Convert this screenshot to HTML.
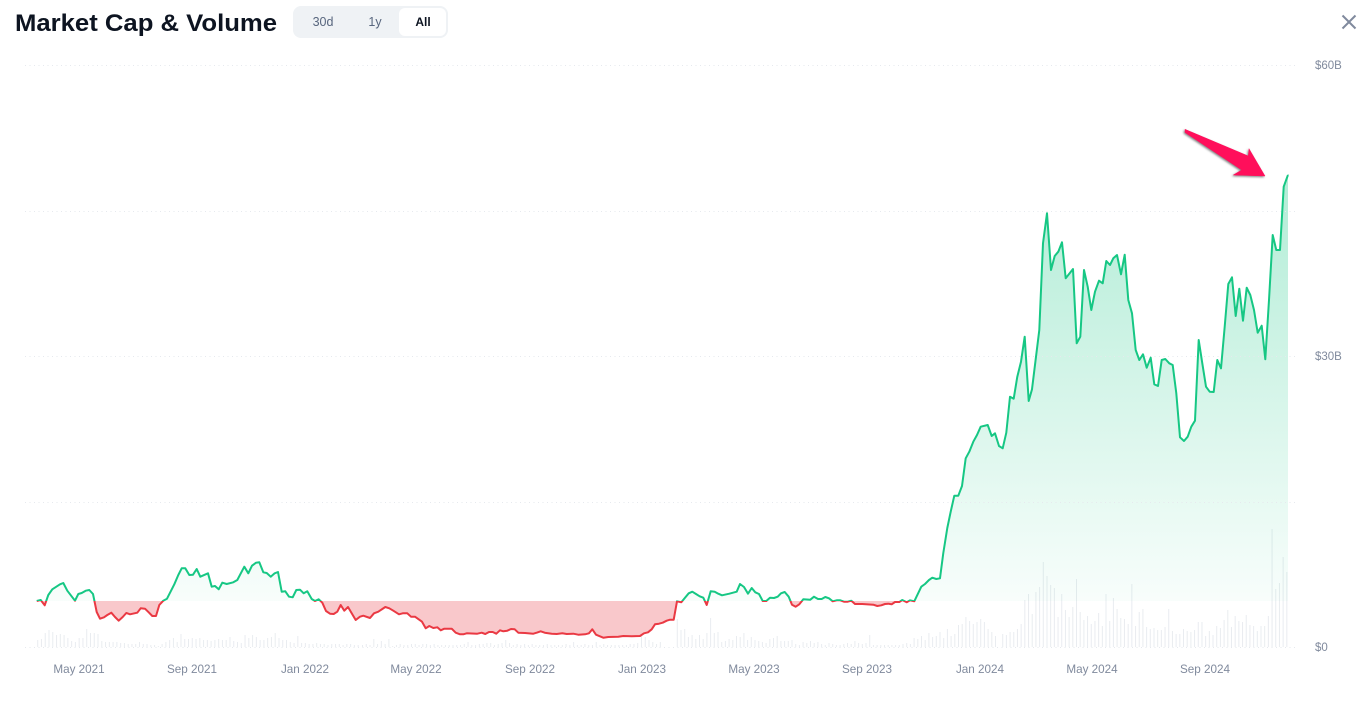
<!DOCTYPE html>
<html lang="en">
<head>
<meta charset="utf-8">
<title>Market Cap &amp; Volume</title>
<style>
html,body{margin:0;padding:0;background:#fff;width:1365px;height:702px;overflow:hidden}
svg{display:block;font-family:"Liberation Sans",sans-serif}
</style>
</head>
<body>
<svg width="1365" height="702" viewBox="0 0 1365 702" xmlns="http://www.w3.org/2000/svg">
<defs>
<linearGradient id="gf" gradientUnits="userSpaceOnUse" x1="0" y1="176" x2="0" y2="601">
<stop offset="0" stop-color="#16c784" stop-opacity=".33"/>
<stop offset="1" stop-color="#16c784" stop-opacity=".03"/>
</linearGradient>
<path id="ln" d="M36.7 601L40.7 600 44.7 605.3 48.3 595 52.3 589.3 60 584.3 63.3 583 67.3 590.7 75 600.7 78.3 594 81.7 593 85.7 590.7 89.3 590 93 594 96.7 612 100 618.7 104 617.3 107.3 615 111.3 612.7 115 617 118.7 620.7 122.7 617 126.3 613 130 614.3 137.3 612.7 140.7 608.3 145 608.7 148.7 612.3 152.3 616 156 616 159.3 605 163.3 600.7 167 598.7 174.3 584.3 178.3 575 181.7 568.3 185.3 568.3 189.3 575 193 574.7 196.7 569 200.3 576.7 208 573.3 211.7 586.7 215 586 218.7 589.3 222.3 582.7 226.7 584 233.3 582.3 237.3 580 244.3 566.7 248.3 573.3 252 565.7 256 562.7 259.3 562.3 263.3 572.3 266.7 573 270.7 576.7 274.7 573.3 278 572 281.7 591.7 285.3 591.3 289 596.7 292.7 597.3 296.3 590 300 589.7 303.7 593.3 307.3 591.3 311.7 599 315 601 318.7 599.3 322.3 602.7 326 611 330 613.7 333.7 614 337.3 611.7 340.7 605 344.3 610.7 348 607 355.7 620 360 616.7 363.3 615.7 370 618 374 613.3 378.3 611.7 385.3 607 389.3 608.3 393.3 610.7 399 614.3 402.7 613.3 407.3 613.3 411 616.7 415 616.7 422 621.7 425.7 628.3 429.3 626 433.3 628 437.3 627.3 440.7 630.3 444.3 628.7 451.7 628.7 455.7 632.7 460 634.3 463.3 634.3 466.7 633.3 477.3 633.7 481.7 632.7 485.3 634 489 632 492.7 632 496.3 633.7 500 630.3 503.3 631.3 507.3 630.7 511 629 514.7 629.3 518.3 632.7 525 633 533.3 633.7 536.7 632.7 540.7 631.3 544.7 632.7 551.7 633.7 556.7 634 562.3 633.3 566.7 634 573.3 633.7 578.3 634.7 585 634.3 589 633.3 592.3 629.3 596 634.7 603.3 637.7 608.3 637 618.3 636.7 623.3 636 631.7 636.3 640 636 644 633.3 648 632.3 651.7 629.3 655 624.3 659 623.7 662.7 622.7 666.7 620.7 670 619.7 673.7 619.7 677 601.3 681.3 602.3 685 597.7 688.7 593.3 692.3 591.7 696 594 699.7 596.3 703.3 597.7 706.7 605 710.7 591.3 714.7 591.7 718.3 593.7 722 595.3 729.3 593.7 736.7 591.7 740 584 744 587 748 593.7 751.7 588 755.3 592.3 759 594 762.7 601 766.3 601 770 597.7 774 598 777.7 596.7 781 593.3 784.7 592 788.7 596.7 792 604.7 795.7 606.7 799.3 604.3 803.3 599.3 810.3 599.7 814 596.7 818 599 821.7 599 825.3 597 829 598.3 832.7 601.3 836.7 600.3 840.3 600.3 844 601.7 847.7 601.7 851.3 600.7 855 604 862.3 604 873.3 604.7 877.3 606 881.3 605.3 885 604 888.3 603.7 891.7 604.3 895 602 899.3 602 902.3 600 906.7 602.3 910 600.3 914.3 601.3 921.3 586.7 925 584 929 580 932.3 577.7 936.3 579 940 578.3 943.3 553 947.3 528 950.7 511.7 954.3 495.7 958.3 495.7 962 486 965.7 458.3 969.3 451.7 973.3 441.7 977 435 980.7 426.7 987.7 425 991.7 436 995 433.3 999 446 1002.7 448.3 1006.3 432.7 1010 396.7 1013.7 398.7 1017.3 376.7 1021 361.7 1024.7 336.7 1028.7 401 1032 389.3 1036 356.7 1039.3 330 1043 243.3 1047 213.3 1051 270 1054.7 256 1058.3 251.7 1062 242.3 1065.7 278.3 1073 269 1076.7 343.3 1080.3 336.7 1084 270 1087.7 286.7 1091.3 310 1095 291.7 1099 280.7 1102.7 283.3 1106.3 261 1110 265 1113.3 258.3 1117 255 1121 274.3 1124.7 254.7 1128.3 300 1132 313.3 1135.7 350 1139.3 360 1143 354.3 1146.7 367.7 1150.7 357.7 1154.3 384.3 1158 386 1161.7 360 1165.3 359 1169.3 363.3 1172.7 365 1176.3 393.3 1180 437.3 1184 441 1187.7 436.7 1191.3 426.7 1195 420.7 1198.7 340 1202.3 363.3 1206 386.7 1209.7 391.7 1213.7 392 1217.3 360 1221 368.3 1224.7 326.7 1228.3 284 1232 277.3 1235.7 316 1239.3 288.7 1243 320.7 1246.7 287.7 1250.3 295 1254 310 1257.7 332.7 1261.7 325.7 1265.3 359.3 1269 300 1272.7 235 1276.3 250 1280 250 1283.7 186.7 1287.7 175.7 1290 175V601"/>
<clipPath id="area"><use href="#ln"/></clipPath>
<clipPath id="xf"><rect x="0" y="0" width="1288" height="702"/></clipPath>
<clipPath id="up"><rect x="0" y="0" width="1288.6" height="601"/></clipPath>
<clipPath id="dn"><rect x="0" y="601" width="1288.6" height="101"/></clipPath>
</defs>

<!-- Header -->
<text x="15" y="31" font-size="24" font-weight="700" fill="#0d1421" textLength="262" lengthAdjust="spacingAndGlyphs">Market Cap &amp; Volume</text>
<rect x="293" y="6" width="155" height="32" rx="8" fill="#eff2f5"/>
<rect x="399" y="8" width="47" height="28" rx="6" fill="#fff"/>
<text x="323" y="26" font-size="12.5" fill="#58667e" text-anchor="middle">30d</text>
<text x="375" y="26" font-size="12.5" fill="#58667e" text-anchor="middle">1y</text>
<text x="423" y="26" font-size="12" font-weight="700" fill="#0d1421" text-anchor="middle">All</text>
<path d="M1342.5 15.5L1355.5 28.5M1355.5 15.5L1342.5 28.5" stroke="#808a9d" stroke-width="2" fill="none"/>

<!-- Volume bars -->
<g stroke="#e9ecf0" stroke-width="1" fill="none">
<path d="M37.7 647v-7m3.77 7v-8m3.77 8v-14m3.77 14v-17m3.77 17v-15m3.77 15v-12m3.77 12v-13m3.77 13v-12m3.77 12v-9m3.77 9v-6m3.77 6v-5m3.77 5v-9m3.77 9v-9m3.77 9v-18m3.77 18v-14m3.77 14v-14m3.77 14v-13m3.77 13v-6m3.77 6v-5m3.77 5v-5m3.77 5v-5m3.77 5v-5m3.77 5v-4m3.77 4v-4m3.77 4v-3m3.77 3v-3m3.77 3v-3m3.77 3v-5m3.77 5v-3m3.77 3v-3m3.77 3v-2m3.77 2v-2m3.77 2v-1m3.77 1v-3m3.77 3v-5m3.77 5v-7m3.77 7v-9m3.77 9v-5m3.77 5v-13m3.77 13v-8m3.77 8v-8m3.77 8v-9m3.77 9v-8m3.77 8v-9m3.77 9v-7m3.77 7v-7m3.77 7v-6m3.77 6v-7m3.77 7v-8m3.77 8v-7m3.77 7v-7m3.77 7v-10m3.77 10v-6m3.77 6v-5m3.77 5v-4m3.77 4v-12m3.77 12v-9m3.77 9v-12m3.77 12v-10m3.77 10v-7m3.77 7v-7m3.77 7v-9m3.77 9v-10m3.77 10v-14m3.77 14v-9m3.77 9v-7m3.77 7v-7m3.77 7v-5m3.77 5v-4m3.77 4v-11m3.77 11v-4m3.77 4v-4m3.77 4v-3m3.77 3v-3m3.77 3v-4m3.77 4v-3m3.77 3v-3m3.77 3v-2m3.77 2v-3m3.77 3v-3m3.77 3v-3m3.77 3v-2m3.77 2v-3m3.77 3v-3m3.77 3v-2m3.77 2v-2"/>
<path d="M362.5 647v-2m3.77 2v-3m3.77 3v-2m3.77 2v-8m3.77 8v-3m3.77 3v-6m3.77 6v-3m3.77 3v-8m3.77 8v-1m3.77 1v-2m3.77 2v-3m3.77 3v-2m3.77 2v-2m3.77 2v-3m3.77 3v-3m3.77 3v-2m3.77 2v-3m3.77 3v-3m3.77 3v-2m3.77 2v-3m3.77 3v-2m3.77 2v-2m3.77 2v-2m3.77 2v-2m3.77 2v-2m3.77 2v-2m3.77 2v-2m3.77 2v-3m3.77 3v-5m3.77 5v-2m3.77 2v-2m3.77 2v-3m3.77 3v-3m3.77 3v-4m3.77 4v-4m3.77 4v-2m3.77 2v-3m3.77 3v-4m3.77 4v-7m3.77 7v-4m3.77 4v-2m3.77 2v-3m3.77 3v-2m3.77 2v-3m3.77 3v-2m3.77 2v-3m3.77 3v-2m3.77 2v-2m3.77 2v-2m3.77 2v-3m3.77 3v-2m3.77 2v-2m3.77 2v-2m3.77 2v-2m3.77 2v-3m3.77 3v-2m3.77 2v-5m3.77 5v-2m3.77 2v-2m3.77 2v-3m3.77 3v-2m3.77 2v-2m3.77 2v-5m3.77 5v-2m3.77 2v-3m3.77 3v-2m3.77 2v-2m3.77 2v-2m3.77 2v-2m3.77 2v-2m3.77 2v-2m3.77 2v-3m3.77 3v-3m3.77 3v-4m3.77 4v-11m3.77 11v-10m3.77 10v-7m3.77 7v-5m3.77 5v-3m3.77 3v-5"/>
<path d="M677.3 647v-28m3.7 28v-17m3.7 17v-18m3.7 18v-10m3.7 10v-12m3.7 12v-8m3.7 8v-12m3.7 12v-8m3.7 8v-14m3.7 14v-29m3.7 29v-14m3.7 14v-15m3.7 15v-5m3.7 5v-6m3.7 6v-8m3.7 8v-7m3.7 7v-11m3.7 11v-10m3.7 10v-14m3.7 14v-7m3.7 7v-10m3.7 10v-7m3.7 7v-6m3.7 6v-5m3.7 5v-4m3.7 4v-8m3.7 8v-9m3.7 9v-11m3.7 11v-6m3.7 6v-6m3.7 6v-6m3.7 6v-7m3.7 7v-3m3.7 3v-2m3.7 2v-5m3.7 5v-4m3.7 4v-6m3.7 6v-4m3.7 4v-5m3.7 5v-3m3.7 3v-2m3.7 2v-4m3.7 4v-3m3.7 3v-2m3.7 2v-2m3.7 2v-3m3.7 3v-4m3.7 4v-3m3.7 3v-6m3.7 6v-4m3.7 4v-3m3.7 3v-4m3.7 4v-12m3.7 12v-2m3.7 2v-2m3.7 2v-2m3.7 2v-2m3.7 2v-2m3.7 2v-2m3.7 2v-2m3.7 2v-2m3.7 2v-3m3.7 3v-4m3.7 4v-3m3.7 3v-9m3.7 9v-8m3.7 8v-11m3.7 11v-7m3.7 7v-14m3.7 14v-10m3.7 10v-11m3.7 11v-15m3.7 15v-9m3.7 9v-18m3.7 18v-11m3.7 11v-13m3.7 13v-22m3.7 22v-23m3.7 23v-30m3.7 30v-26m3.7 26v-23m3.7 23v-25m3.7 25v-28m3.7 28v-25m3.7 25v-18m3.7 18v-15m3.7 15v-11"/>
<path d="M1002.7 647v-13m3.69 13v-12m3.69 12v-15m3.69 15v-15m3.69 15v-18m3.69 18v-23m3.69 23v-47m3.69 47v-53m3.69 53v-33m3.69 33v-55m3.69 55v-60m3.69 60v-85m3.69 85v-71m3.69 71v-62m3.69 62v-59m3.69 59v-30m3.69 30v-53m3.69 53v-37m3.69 37v-30m3.69 30v-40m3.69 40v-68m3.69 68v-35m3.69 35v-27m3.69 27v-31m3.69 31v-23m3.69 23v-26m3.69 26v-34m3.69 34v-21m3.69 21v-53m3.69 53v-26m3.69 26v-49m3.69 49v-38m3.69 38v-29m3.69 29v-28m3.69 28v-23m3.69 23v-63m3.69 63v-21m3.69 21v-35m3.69 35v-38m3.69 38v-20m3.69 20v-18m3.69 18v-19m3.69 19v-17m3.69 17v-17m3.69 17v-20m3.69 20v-38m3.69 38v-16m3.69 16v-13m3.69 13v-13m3.69 13v-18m3.69 18v-16m3.69 16v-15m3.69 15v-17m3.69 17v-25m3.69 25v-25m3.69 25v-11m3.69 11v-16m3.69 16v-12m3.69 12v-21m3.69 21v-19m3.69 19v-27m3.69 27v-37m3.69 37v-20m3.69 20v-31m3.69 31v-26m3.69 26v-25m3.69 25v-32m3.69 32v-22m3.69 22v-21m3.69 21v-16m3.69 16v-21m3.69 21v-21m3.69 21v-31m3.69 31v-118m3.69 118v-58m3.69 58v-64m3.69 64v-90m3.69 90v-75"/>
</g>

<!-- Area fill -->
<g clip-path="url(#xf)">
<g clip-path="url(#area)">
<rect x="30" y="170" width="1265" height="431" fill="url(#gf)"/>
<rect x="30" y="601" width="1265" height="50" fill="#f9c8cb"/>
</g>
</g>

<!-- Grid -->
<g stroke="#e6e9ee" stroke-width="1" stroke-dasharray="1 3.5" fill="none">
<path d="M25 65.5H1298M25 211.5H1298M25 356.5H1298M25 502.5H1298M25 647.5H1298"/>
</g>

<!-- Price line -->
<g fill="none" stroke-width="2" stroke-linejoin="round">
<g clip-path="url(#up)"><use href="#ln" stroke="#16c784"/></g>
<g clip-path="url(#dn)"><use href="#ln" stroke="#ea3943"/></g>
</g>

<!-- Y axis -->
<g font-size="11.5" fill="#808a9d">
<text x="1315" y="69">$60B</text>
<text x="1315" y="360">$30B</text>
<text x="1315" y="651">$0</text>
</g>

<!-- X axis -->
<g font-size="11.7" fill="#808a9d" text-anchor="middle">
<text x="79" y="673">May 2021</text>
<text x="192" y="673">Sep 2021</text>
<text x="305" y="673">Jan 2022</text>
<text x="416" y="673">May 2022</text>
<text x="530" y="673">Sep 2022</text>
<text x="642" y="673">Jan 2023</text>
<text x="754" y="673">May 2023</text>
<text x="867" y="673">Sep 2023</text>
<text x="980" y="673">Jan 2024</text>
<text x="1092" y="673">May 2024</text>
<text x="1205" y="673">Sep 2024</text>
</g>

<!-- Arrow -->
<polygon points="1185,129.3 1248.3,156 1249,148.7 1265,176 1233.3,175 1241.7,170 1185,132.5" fill="#ff0f5b" stroke="#ff0f5b" stroke-width=".5" stroke-linejoin="round" style="filter:drop-shadow(-1px 1.5px 1px rgba(0,0,0,.5))"/>
</svg>
</body>
</html>
